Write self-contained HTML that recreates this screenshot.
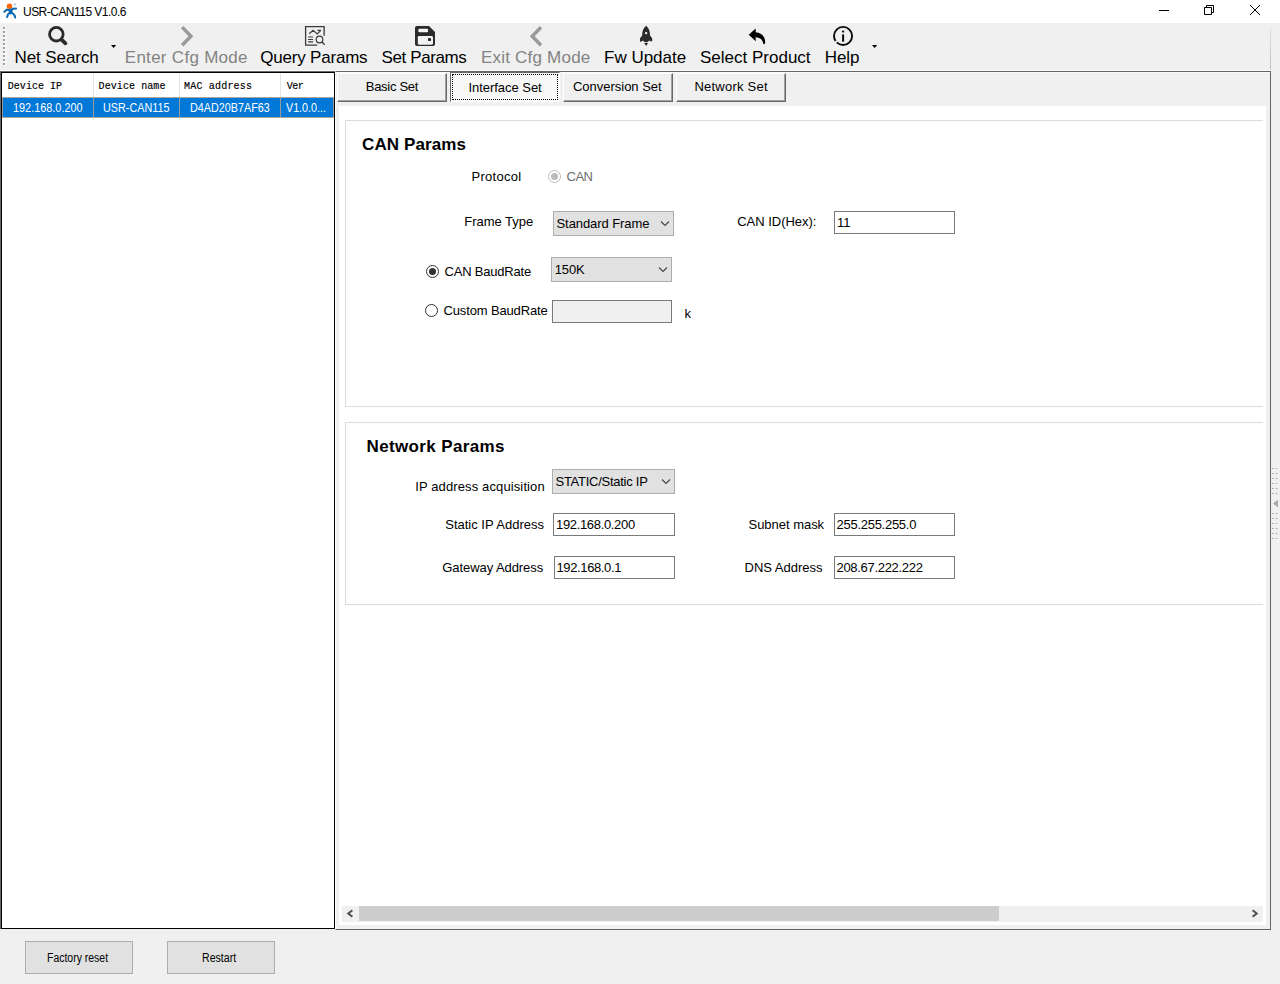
<!DOCTYPE html>
<html lang="en">
<head>
<meta charset="utf-8">
<title>USR-CAN115 V1.0.6</title>
<style>
html,body{margin:0;padding:0;}
body{width:1280px;height:984px;overflow:hidden;background:#f0f0f0;font-family:"Liberation Sans",sans-serif;}
#app{position:relative;width:1280px;height:984px;overflow:hidden;background:#f0f0f0;}
#app div,#app svg,#app span{position:absolute;box-sizing:border-box;}
.t{white-space:nowrap;line-height:20px;height:20px;color:#000;}
#titlebar{left:0;top:0;width:1280px;height:23px;background:#fff;}
#tbend{left:1270px;top:27px;width:1px;height:42px;background:linear-gradient(to bottom,#e4e4e4,#bdbdbd);}
/* device list */
#list{left:0;top:71px;width:335px;height:858px;background:#fff;border-left:1px solid #696969;border-top:1px solid #696969;}
#list .in{left:0;top:0;width:334px;height:857px;border:1px solid #000;background:#fff;}
#lh{left:2px;top:73px;width:332px;height:24px;background:#fff;}
.vs{top:73px;width:1px;height:24px;background:#e5e5e5;}
#row{left:2px;top:98px;width:332px;height:19px;background:#0078d7;}
#rowline{left:2px;top:97px;width:332px;height:1px;background:#a9a5a0;}
#rowline2{left:2px;top:117px;width:332px;height:1px;background:#a9a5a0;}
.rs{top:98px;width:1px;height:19px;background:#9a9a9a;}
/* right panel */
#panel{left:335px;top:71px;width:936px;height:859px;border:1px solid #646464;border-left-color:#fff;background:#f0f0f0;}
#ptopw{left:336px;top:72px;width:934px;height:1px;background:#fafafa;}
#page{left:339px;top:106px;width:927px;height:819px;background:#fff;}
.tab{top:73px;height:29px;width:110px;background:#f0f0f0;border-top:1px solid #fff;border-left:1px solid #fff;border-right:1px solid #696969;border-bottom:1px solid #696969;}
.tab i{position:absolute;left:0;top:0;right:0;bottom:0;border-right:1px solid #a0a0a0;border-bottom:1px solid #a0a0a0;}
#tabsel{left:450px;top:72px;width:110px;height:30px;background:#f8f8f8;border-top:1px solid #696969;border-left:1px solid #696969;border-right:1px solid #fff;border-bottom:1px solid #fff;}
#tabsel i{position:absolute;left:1px;top:1px;right:1px;bottom:1px;border:1px dotted #000;}
.gb{left:345px;width:918px;border:1px solid #dcdcdc;border-right:none;background:#fff;}
.cb{background:#e1e1e1;border:1px solid #adadad;}
.tx{background:#fff;border:1px solid #7a7a7a;}
.rad{width:13px;height:13px;border-radius:50%;border:1px solid #333;background:#fff;}
.rad b{position:absolute;left:2px;top:2px;width:7px;height:7px;border-radius:50%;background:#333;}
.btn{background:#e1e1e1;border:1px solid #adadad;}
#sb{left:342px;top:906px;width:921px;height:16px;background:#f0f0f0;}
#thumb{left:359px;top:906px;width:640px;height:15px;background:#cdcdcd;}
.dot{width:1px;height:1px;background:#a0a0a0;}
#tbline{left:0;top:70px;width:1271px;height:1px;background:#fbfbfb;}

</style>
</head>
<body>
<div id="app">
<div id="titlebar"></div>
<!-- app logo -->
<svg style="left:0;top:0" width="22" height="22" viewBox="0 0 22 22">
<circle cx="9.5" cy="6.3" r="2.75" fill="#ff6600"/>
<circle cx="14.8" cy="4.45" r="1.15" fill="#a9c9e6"/>
<g fill="none" stroke="#0a69b3" stroke-linecap="round" stroke-linejoin="round">
<path d="M4.3 11.8 L7 9.5 L10.2 10.6 L13 8.7 L16.1 8.5" stroke-width="2"/>
<path d="M10.7 10.2 V12.6" stroke-width="3.6"/>
<path d="M10 12.8 C8 13.4 7.5 15 7.1 17.1" stroke-width="2"/>
<path d="M11.4 12.6 C13.8 13.6 14.9 15 15.2 17.5" stroke-width="2"/>
</g>
</svg>
<!-- window controls -->
<svg style="left:1150px;top:0" width="130" height="23" viewBox="0 0 130 23" fill="none" stroke="#000" stroke-width="1">
<path d="M9 10.5 H19"/>
<path d="M54.5 7.5 h7 v7 h-7 z M56.5 7.5 v-2 h7 v7 h-2" />
<path d="M100 5 L110 15 M110 5 L100 15"/>
</svg>
<svg style="left:3px;top:27px" width="4" height="40" viewBox="0 0 4 40"><rect x="1" y="1" width="2" height="2" fill="#fff"/><rect x="0" y="0" width="2" height="2" fill="#a0a0a0"/><rect x="1" y="5" width="2" height="2" fill="#fff"/><rect x="0" y="4" width="2" height="2" fill="#a0a0a0"/><rect x="1" y="9" width="2" height="2" fill="#fff"/><rect x="0" y="8" width="2" height="2" fill="#a0a0a0"/><rect x="1" y="13" width="2" height="2" fill="#fff"/><rect x="0" y="12" width="2" height="2" fill="#a0a0a0"/><rect x="1" y="17" width="2" height="2" fill="#fff"/><rect x="0" y="16" width="2" height="2" fill="#a0a0a0"/><rect x="1" y="21" width="2" height="2" fill="#fff"/><rect x="0" y="20" width="2" height="2" fill="#a0a0a0"/><rect x="1" y="25" width="2" height="2" fill="#fff"/><rect x="0" y="24" width="2" height="2" fill="#a0a0a0"/><rect x="1" y="29" width="2" height="2" fill="#fff"/><rect x="0" y="28" width="2" height="2" fill="#a0a0a0"/><rect x="1" y="33" width="2" height="2" fill="#fff"/><rect x="0" y="32" width="2" height="2" fill="#a0a0a0"/><rect x="1" y="37" width="2" height="2" fill="#fff"/><rect x="0" y="36" width="2" height="2" fill="#a0a0a0"/></svg>
<div id="tbend"></div>
<div id="tbline"></div>
<!-- toolbar icons -->
<svg id="icons" style="left:0;top:23px" width="900" height="48" viewBox="0 23 900 48">
<!-- search -->
<g fill="none" stroke="#2b2b2b" stroke-linecap="round">
<circle cx="56.35" cy="34.2" r="6.8" stroke-width="2.8"/>
<path d="M61.8 39.8 L65.4 43.3" stroke-width="3.8"/>
</g>
<path d="M111 45 h5.2 l-2.6 3 z" fill="#000"/>
<!-- enter cfg > -->
<path d="M182.15 27.15 L190.9 36.2 L182.15 45.25" fill="none" stroke="#9a9a9a" stroke-width="3.5"/>
<!-- query params -->
<g fill="none" stroke="#3a3a3a" stroke-width="1.3">
<path d="M317.2 45.1 H305.6 V26.6 H324.1 V35.8"/>
<path d="M309.2 33.7 L313.1 30.4 L317.2 33.9 L320.6 30.6 M317.4 30.4 H321" stroke-width="1.2"/>
<path d="M308.1 37 h5 M308.1 39.5 h5 M308.1 41.9 h5" stroke-width="1.2"/>
<circle cx="319.5" cy="39.5" r="3.3" stroke-width="1.2"/>
<path d="M322 42 L324.7 44.7" stroke-width="1.4"/>
</g>
<!-- set params floppy -->
<path d="M416.8 26 H429 L435 32 V44 Q435 45.9 433.1 45.9 H416.9 Q415 45.9 415 44 V27.9 Q415 26 416.8 26 Z" fill="#2b2b2b"/>
<rect x="418.3" y="28.7" width="9.8" height="3.5" rx="1.2" fill="#f6f6f6"/>
<rect x="417.8" y="35.9" width="15.2" height="8.8" rx="1.4" fill="#f2f2f2"/>
<rect x="428" y="38.1" width="3" height="2.8" rx="0.3" fill="#2b2b2b"/>
<!-- exit cfg < -->
<path d="M540.95 27.2 L532.25 36.25 L540.95 45.3" fill="none" stroke="#9a9a9a" stroke-width="3.5"/>
<!-- rocket -->
<path d="M646.1 25.8 C648.6 28 650 31 650 34.5 V35.6 L652.2 38.2 V41 L651 41.4 L649.2 40.4 C648.4 41.6 647.4 42.2 646.1 42.2 C644.8 42.2 643.8 41.6 643 40.4 L641.2 41.8 L640 41.4 V38.2 L642.2 35.6 V34.5 C642.2 31 643.6 28 646.1 25.8 Z" fill="#2b2b2b"/>
<circle cx="646.1" cy="33.1" r="1.2" fill="#f6f6f6"/>
<path d="M644.2 43.1 h3.9 l-1.95 2.8 z" fill="#2b2b2b"/>
<!-- reply arrow -->
<path d="M748.7 34.8 L755.7 28.6 V32.3 C761.5 32.6 765.2 36.6 765.2 42 C765.2 43.2 764.8 44.2 764 44.2 C763.4 44.2 763.1 43.6 763 42.6 C762.4 39.2 759.6 37.4 755.7 37.2 V41.2 Z" fill="#000"/>
<!-- info -->
<circle cx="843.05" cy="35.95" r="9.05" fill="none" stroke="#0a0a0a" stroke-width="1.9" stroke-dasharray="35.2 1.8 100" transform="rotate(-90 843.05 35.95)"/>
<path d="M843.1 34.4 V41.7" stroke="#0a0a0a" stroke-width="2" fill="none"/>
<circle cx="843.1" cy="31.6" r="1.15" fill="#0a0a0a"/>
<path d="M872 45 h5.2 l-2.6 3 z" fill="#000"/>
</svg>
<!-- device list -->
<div id="list"><div class="in"></div></div>
<div id="lh"></div>
<div class="vs" style="left:93px"></div><div class="vs" style="left:179px"></div><div class="vs" style="left:280px"></div>
<div id="rowline"></div>
<div id="row"></div>
<div id="rowline2"></div>
<div class="rs" style="left:2px"></div><div class="rs" style="left:333px"></div><div class="rs" style="left:93px"></div><div class="rs" style="left:179px"></div><div class="rs" style="left:280px"></div>
<!-- right panel -->
<div id="panel"></div>
<div id="ptopw"></div>
<div class="tab" style="left:337px"><i></i></div>
<div id="tabsel"><i></i></div>
<div class="tab" style="left:563px"><i></i></div>
<div class="tab" style="left:676px"><i></i></div>
<div id="page"></div>
<div class="gb" style="top:120px;height:287px"></div>
<div class="gb" style="top:422px;height:183px"></div>
<!-- CAN params controls -->
<div class="rad" style="left:548px;top:170px;border-color:#bcbcbc"><b style="background:#bcbcbc"></b></div>
<div class="cb" style="left:553px;top:211px;width:121px;height:25px"></div>
<svg style="left:660px;top:220px" width="10" height="8" viewBox="0 0 10 8"><path d="M1 1.5 L5 5.5 L9 1.5" fill="none" stroke="#444" stroke-width="1.1"/></svg>
<div class="tx" style="left:834px;top:211px;width:121px;height:23px"></div>
<div class="rad" style="left:426px;top:265px"><b></b></div>
<div class="cb" style="left:551px;top:257px;width:121px;height:25px"></div>
<svg style="left:658px;top:266px" width="10" height="8" viewBox="0 0 10 8"><path d="M1 1.5 L5 5.5 L9 1.5" fill="none" stroke="#444" stroke-width="1.1"/></svg>
<div class="rad" style="left:425px;top:304px"></div>
<div class="tx" style="left:552px;top:300px;width:120px;height:23px;background:#f0f0f0"></div>
<!-- Network params controls -->
<div class="cb" style="left:552px;top:469px;width:123px;height:25px"></div>
<svg style="left:661px;top:478px" width="10" height="8" viewBox="0 0 10 8"><path d="M1 1.5 L5 5.5 L9 1.5" fill="none" stroke="#444" stroke-width="1.1"/></svg>
<div class="tx" style="left:553px;top:513px;width:122px;height:23px"></div>
<div class="tx" style="left:834px;top:513px;width:121px;height:23px"></div>
<div class="tx" style="left:554px;top:556px;width:121px;height:23px"></div>
<div class="tx" style="left:834px;top:556px;width:121px;height:23px"></div>
<!-- scrollbar -->
<div id="sb"></div>
<div id="thumb"></div>
<svg style="left:342px;top:906px" width="17" height="16" viewBox="0 0 17 16"><path d="M10.4 4.3 L6.3 7.5 L10.4 10.7" fill="none" stroke="#505050" stroke-width="2"/></svg>
<svg style="left:1246px;top:906px" width="17" height="16" viewBox="0 0 17 16"><path d="M6.6 4.3 L10.7 7.5 L6.6 10.7" fill="none" stroke="#505050" stroke-width="2"/></svg>
<!-- splitter handle -->
<svg style="left:1271px;top:460px" width="9" height="90" viewBox="1271 460 9 90">
<g fill="#a8a8a8">
<rect x="1272.1" y="468" width="1.6" height="1"/><rect x="1275.7" y="468" width="1.6" height="1"/>
<rect x="1272.1" y="473" width="1.6" height="1"/><rect x="1275.7" y="473" width="1.6" height="1"/>
<rect x="1272.1" y="478" width="1.6" height="1"/><rect x="1275.7" y="478" width="1.6" height="1"/>
<rect x="1272.1" y="483" width="1.6" height="1"/><rect x="1275.7" y="483" width="1.6" height="1"/>
<rect x="1272.1" y="488" width="1.6" height="1"/><rect x="1275.7" y="488" width="1.6" height="1"/>
<rect x="1272.1" y="493" width="1.6" height="1"/><rect x="1275.7" y="493" width="1.6" height="1"/>
<path d="M1273 503.5 L1278 499.8 V507.2 Z"/>
<rect x="1272.1" y="513" width="1.6" height="1"/><rect x="1275.7" y="513" width="1.6" height="1"/>
<rect x="1272.1" y="518" width="1.6" height="1"/><rect x="1275.7" y="518" width="1.6" height="1"/>
<rect x="1272.1" y="523" width="1.6" height="1"/><rect x="1275.7" y="523" width="1.6" height="1"/>
<rect x="1272.1" y="528" width="1.6" height="1"/><rect x="1275.7" y="528" width="1.6" height="1"/>
<rect x="1272.1" y="533" width="1.6" height="1"/><rect x="1275.7" y="533" width="1.6" height="1"/>
<rect x="1272.1" y="538" width="1.6" height="1"/><rect x="1275.7" y="538" width="1.6" height="1"/>
</g>
</svg>
<!-- bottom buttons -->
<div class="btn" style="left:25px;top:941px;width:108px;height:33px"></div>
<div class="btn" style="left:167px;top:941px;width:108px;height:33px"></div>

<span class="t" id="t0" style="left:23.00px;top:2.00px;font-size:12px;letter-spacing:-0.524px;">USR-CAN115 V1.0.6</span>
<span class="t" id="t1" style="left:14.50px;top:48.00px;font-size:17px;letter-spacing:-0.084px;">Net Search</span>
<span class="t" id="t2" style="left:124.75px;top:48.00px;font-size:17px;color:#838383;letter-spacing:0.288px;">Enter Cfg Mode</span>
<span class="t" id="t3" style="left:260.25px;top:48.00px;font-size:17px;letter-spacing:-0.204px;">Query Params</span>
<span class="t" id="t4" style="left:381.50px;top:48.00px;font-size:17px;letter-spacing:-0.389px;">Set Params</span>
<span class="t" id="t5" style="left:481.00px;top:48.00px;font-size:17px;color:#838383;letter-spacing:0.208px;">Exit Cfg Mode</span>
<span class="t" id="t6" style="left:604.00px;top:48.00px;font-size:17px;">Fw Update</span>
<span class="t" id="t7" style="left:700.00px;top:48.00px;font-size:17px;">Select Product</span>
<span class="t" id="t8" style="left:824.75px;top:48.00px;font-size:17px;letter-spacing:-0.084px;">Help</span>
<span class="t" id="t9" style="left:7.80px;top:77.00px;font-size:10px;font-family:'Liberation Mono', monospace;-webkit-text-stroke:0.15px #000;letter-spacing:0.036px;">Device IP</span>
<span class="t" id="t10" style="left:98.60px;top:77.00px;font-size:10px;font-family:'Liberation Mono', monospace;-webkit-text-stroke:0.15px #000;letter-spacing:0.080px;">Device name</span>
<span class="t" id="t11" style="left:184.00px;top:77.00px;font-size:10px;font-family:'Liberation Mono', monospace;-webkit-text-stroke:0.15px #000;letter-spacing:0.200px;">MAC address</span>
<span class="t" id="t12" style="left:286.80px;top:77.00px;font-size:10px;font-family:'Liberation Mono', monospace;-webkit-text-stroke:0.15px #000;letter-spacing:-0.500px;">Ver</span>
<span class="t" id="t13" style="left:12.80px;top:98.00px;font-size:12px;color:#fff;transform:scaleX(0.9067);transform-origin:0 0;">192.168.0.200</span>
<span class="t" id="t14" style="left:102.60px;top:98.00px;font-size:12px;color:#fff;transform:scaleX(0.9014);transform-origin:0 0;">USR-CAN115</span>
<span class="t" id="t15" style="left:189.70px;top:98.00px;font-size:12px;color:#fff;transform:scaleX(0.9001);transform-origin:0 0;">D4AD20B7AF63</span>
<span class="t" id="t16" style="left:286.30px;top:98.00px;font-size:12px;color:#fff;transform:scaleX(0.8932);transform-origin:0 0;">V1.0.0...</span>
<span class="t" id="t17" style="left:365.75px;top:77.00px;font-size:13px;letter-spacing:-0.282px;">Basic Set</span>
<span class="t" id="t18" style="left:468.50px;top:78.00px;font-size:13px;letter-spacing:-0.042px;">Interface Set</span>
<span class="t" id="t19" style="left:573.00px;top:77.00px;font-size:13px;letter-spacing:-0.020px;">Conversion Set</span>
<span class="t" id="t20" style="left:694.40px;top:77.00px;font-size:13px;letter-spacing:0.240px;">Network Set</span>
<span class="t" id="t21" style="left:362.00px;top:135.00px;font-size:17px;font-weight:700;letter-spacing:0.111px;">CAN Params</span>
<span class="t" id="t22" style="left:471.50px;top:167.00px;font-size:13px;letter-spacing:0.286px;">Protocol</span>
<span class="t" id="t23" style="left:566.50px;top:167.00px;font-size:13px;color:#6d6d6d;letter-spacing:-0.500px;">CAN</span>
<span class="t" id="t24" style="left:464.25px;top:212.00px;font-size:13px;letter-spacing:-0.027px;">Frame Type</span>
<span class="t" id="t25" style="left:556.50px;top:214.00px;font-size:13px;letter-spacing:-0.077px;">Standard Frame</span>
<span class="t" id="t26" style="left:737.25px;top:212.00px;font-size:13px;letter-spacing:-0.022px;">CAN ID(Hex):</span>
<span class="t" id="t27" style="left:837.00px;top:213.00px;font-size:13px;">11</span>
<span class="t" id="t28" style="left:444.50px;top:262.00px;font-size:13px;letter-spacing:-0.204px;">CAN BaudRate</span>
<span class="t" id="t29" style="left:554.75px;top:260.00px;font-size:13px;letter-spacing:-0.167px;">150K</span>
<span class="t" id="t30" style="left:443.50px;top:301.00px;font-size:13px;letter-spacing:-0.143px;">Custom BaudRate</span>
<span class="t" id="t31" style="left:684.50px;top:304.00px;font-size:13px;">k</span>
<span class="t" id="t32" style="left:366.50px;top:437.00px;font-size:17px;font-weight:700;letter-spacing:0.365px;">Network Params</span>
<span class="t" id="t33" style="left:415.25px;top:477.00px;font-size:13px;letter-spacing:0.119px;">IP address acquisition</span>
<span class="t" id="t34" style="left:555.50px;top:472.00px;font-size:13px;letter-spacing:-0.267px;">STATIC/Static IP</span>
<span class="t" id="t35" style="left:445.25px;top:515.00px;font-size:13px;">Static IP Address</span>
<span class="t" id="t36" style="left:556.00px;top:515.00px;font-size:13px;letter-spacing:-0.333px;">192.168.0.200</span>
<span class="t" id="t37" style="left:748.50px;top:515.00px;font-size:13px;letter-spacing:-0.025px;">Subnet mask</span>
<span class="t" id="t38" style="left:836.50px;top:515.00px;font-size:13px;letter-spacing:-0.270px;">255.255.255.0</span>
<span class="t" id="t39" style="left:442.25px;top:558.00px;font-size:13px;letter-spacing:-0.071px;">Gateway Address</span>
<span class="t" id="t40" style="left:556.50px;top:558.00px;font-size:13px;letter-spacing:-0.375px;">192.168.0.1</span>
<span class="t" id="t41" style="left:744.50px;top:558.00px;font-size:13px;">DNS Address</span>
<span class="t" id="t42" style="left:836.50px;top:558.00px;font-size:13px;letter-spacing:-0.308px;">208.67.222.222</span>
<span class="t" id="t43" style="left:47.25px;top:948.00px;font-size:12.5px;transform:scaleX(0.8369);transform-origin:0 0;">Factory reset</span>
<span class="t" id="t44" style="left:202.25px;top:948.00px;font-size:12.5px;transform:scaleX(0.8462);transform-origin:0 0;">Restart</span>
</div>
</body>
</html>
